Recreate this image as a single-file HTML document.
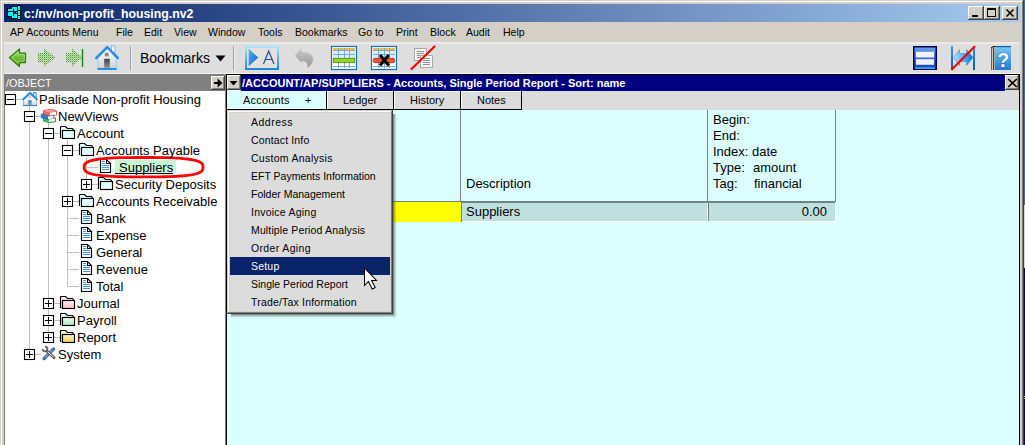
<!DOCTYPE html>
<html><head><meta charset="utf-8">
<style>
*{margin:0;padding:0;box-sizing:border-box}
html,body{width:1025px;height:445px;overflow:hidden;background:#d4d0c8;font-family:"Liberation Sans",sans-serif;position:relative}
.a{position:absolute}
.t{position:absolute;white-space:nowrap;line-height:1}
svg{position:absolute;overflow:visible}
</style></head><body>
<div class="a" style="left:1px;top:1px;width:1px;height:444px;background:#fff;"></div>
<div class="a" style="left:1px;top:1px;width:1021px;height:1px;background:#fff;"></div>
<div class="a" style="left:1022px;top:1px;width:1px;height:444px;background:#808080;"></div>
<div class="a" style="left:1023px;top:0px;width:1px;height:445px;background:#404040;"></div>
<div class="a" style="left:1024px;top:0px;width:1px;height:205px;background:#3a6ea5;"></div>
<div class="a" style="left:1024px;top:205px;width:1px;height:63px;background:#d8d8d8;"></div>
<div class="a" style="left:1024px;top:268px;width:1px;height:177px;background:#000080;"></div>
<div class="a" style="left:1024px;top:396px;width:1px;height:1px;background:#ffd000;"></div>
<div class="a" style="left:1024px;top:398px;width:1px;height:1px;background:#e0a040;"></div>
<div class="a" style="left:4px;top:4px;width:1016px;height:18px;background:linear-gradient(to right,#0a246a,#a6caf0);"></div>
<svg style="left:0;top:0" width="30" height="24" viewBox="0 0 30 24"><g fill="#000"><rect x="7" y="8" width="7" height="4"/><rect x="7" y="11" width="7" height="6"/><rect x="11" y="6" width="7" height="4"/><rect x="13" y="8" width="5" height="4"/><rect x="13" y="13" width="5" height="4"/><rect x="11" y="15" width="7" height="4"/><rect x="15" y="11" width="3" height="3"/><rect x="17" y="5" width="4" height="6"/><rect x="17" y="10" width="4" height="6"/><rect x="17" y="15" width="4" height="5"/></g><g fill="#00ffff"><rect x="8" y="9" width="5" height="2"/><rect x="8" y="12" width="5" height="4"/><rect x="12" y="7" width="5" height="2"/><rect x="14" y="9" width="3" height="2"/><rect x="14" y="14" width="3" height="2"/><rect x="12" y="16" width="5" height="2"/><rect x="16" y="12" width="1" height="1"/><rect x="18" y="6" width="2" height="4"/><rect x="18" y="11" width="2" height="4"/><rect x="18" y="16" width="2" height="3"/></g></svg>
<div class="t" style="left:24px;top:8px;font-size:12.3px;color:#fff;font-weight:bold">c:/nv/non-profit_housing.nv2</div>
<div class="a" style="left:968px;top:6px;width:16px;height:14px;background:#404040;"></div>
<div class="a" style="left:968px;top:6px;width:15px;height:13px;background:#fff;"></div>
<div class="a" style="left:969px;top:7px;width:14px;height:12px;background:#808080;"></div>
<div class="a" style="left:969px;top:7px;width:13px;height:11px;background:#d4d0c8;"></div>
<div class="a" style="left:984px;top:6px;width:16px;height:14px;background:#404040;"></div>
<div class="a" style="left:984px;top:6px;width:15px;height:13px;background:#fff;"></div>
<div class="a" style="left:985px;top:7px;width:14px;height:12px;background:#808080;"></div>
<div class="a" style="left:985px;top:7px;width:13px;height:11px;background:#d4d0c8;"></div>
<div class="a" style="left:1002px;top:6px;width:16px;height:14px;background:#404040;"></div>
<div class="a" style="left:1002px;top:6px;width:15px;height:13px;background:#fff;"></div>
<div class="a" style="left:1003px;top:7px;width:14px;height:12px;background:#808080;"></div>
<div class="a" style="left:1003px;top:7px;width:13px;height:11px;background:#d4d0c8;"></div>
<div class="a" style="left:972px;top:15px;width:6px;height:2px;background:#000;"></div>
<div class="a" style="left:987px;top:8px;width:9px;height:9px;background:#000;"></div>
<div class="a" style="left:988px;top:10px;width:7px;height:6px;background:#d4d0c8;"></div>
<svg style="left:1000px;top:0" width="20" height="22" viewBox="1000 0 20 22"><path d="M1006.5 9.5 L1013.5 16.5 M1013.5 9.5 L1006.5 16.5" stroke="#000" stroke-width="1.5"/></svg>
<div class="t" style="left:10px;top:27px;font-size:10.5px;color:#000;">AP Accounts Menu</div>
<div class="t" style="left:116px;top:27px;font-size:10.5px;color:#000;">File</div>
<div class="t" style="left:144px;top:27px;font-size:10.5px;color:#000;">Edit</div>
<div class="t" style="left:174px;top:27px;font-size:10.5px;color:#000;">View</div>
<div class="t" style="left:208px;top:27px;font-size:10.5px;color:#000;">Window</div>
<div class="t" style="left:258px;top:27px;font-size:10.5px;color:#000;">Tools</div>
<div class="t" style="left:295px;top:27px;font-size:10.5px;color:#000;">Bookmarks</div>
<div class="t" style="left:358px;top:27px;font-size:10.5px;color:#000;">Go to</div>
<div class="t" style="left:396px;top:27px;font-size:10.5px;color:#000;">Print</div>
<div class="t" style="left:430px;top:27px;font-size:10.5px;color:#000;">Block</div>
<div class="t" style="left:466px;top:27px;font-size:10.5px;color:#000;">Audit</div>
<div class="t" style="left:503px;top:27px;font-size:10.5px;color:#000;">Help</div>
<div class="a" style="left:4px;top:42px;width:1016px;height:2px;background:#eaeaea;"></div>
<div class="a" style="left:4px;top:44px;width:1016px;height:29px;background:#dedede;"></div>
<div class="a" style="left:4px;top:73px;width:1016px;height:1px;background:#f4f4f4;"></div>
<svg style="left:0;top:40px" width="1025" height="36" viewBox="0 40 1025 36">
<defs>
<linearGradient id="gA" x1="0" y1="0" x2="0" y2="1"><stop offset="0" stop-color="#9ee06a"/><stop offset="1" stop-color="#3f9a12"/></linearGradient>
<pattern id="dots" width="2" height="2" patternUnits="userSpaceOnUse"><rect x="0" y="1" width="1" height="1" fill="#2a8a10"/><rect x="1" y="0" width="1" height="1" fill="#78cc48"/></pattern>
<linearGradient id="gBlue" x1="0" y1="0" x2="0" y2="1"><stop offset="0" stop-color="#a8e4ff"/><stop offset="1" stop-color="#1a88e0"/></linearGradient>
<linearGradient id="gTri" x1="0" y1="0" x2="1" y2="1"><stop offset="0" stop-color="#5ab0f0"/><stop offset="1" stop-color="#0a60c0"/></linearGradient>
<linearGradient id="gGray" x1="0" y1="0" x2="0" y2="1"><stop offset="0" stop-color="#c8c8c8"/><stop offset="1" stop-color="#909090"/></linearGradient>
<linearGradient id="gWin" x1="0" y1="0" x2="0" y2="1"><stop offset="0" stop-color="#6aa0f0"/><stop offset="1" stop-color="#1040c0"/></linearGradient>
<linearGradient id="gBook" x1="0" y1="0" x2="0" y2="1"><stop offset="0" stop-color="#7cc8f4"/><stop offset="1" stop-color="#1e7ed0"/></linearGradient>
<linearGradient id="gHouse" x1="0" y1="0" x2="0" y2="1"><stop offset="0" stop-color="#ffffff"/><stop offset="1" stop-color="#d0d0d0"/></linearGradient>
<linearGradient id="gDoor" x1="0" y1="0" x2="0" y2="1"><stop offset="0" stop-color="#404040"/><stop offset="1" stop-color="#909090"/></linearGradient>
</defs>
<!-- back arrow -->
<path d="M9.3 57.6 L19.5 48.9 V53.2 H25.5 V62.6 H19.5 V66.6 Z" fill="url(#gA)" stroke="#2e7c0a" stroke-width="1.2" stroke-linejoin="round"/>
<path d="M12 57.6 L18.2 52.2 V54.6 H24.2 V61.2 H18.2 V63.2 Z" fill="none" stroke="#b8f090" stroke-width="0.8" opacity="0.8"/>
<!-- forward dotted -->
<path d="M38 53 H44 V48.5 L55.5 57.5 L44 66.5 V62.5 H38 Z" fill="url(#dots)"/>
<path d="M38 53 H44 V48.5 L55.5 57.5 L44 66.5 V62.5 H38 Z" fill="#b0e090" opacity="0.18"/>
<!-- forward to end dotted -->
<path d="M66 53 H72 V48.5 L82.5 57.5 L72 66.5 V62.5 H66 Z" fill="url(#dots)"/>
<path d="M66 53 H72 V48.5 L82.5 57.5 L72 66.5 V62.5 H66 Z" fill="#b0e090" opacity="0.18"/>
<rect x="81.8" y="49" width="1.4" height="18" fill="#108a10"/>
<!-- home -->
<rect x="111.5" y="46" width="3.5" height="7" fill="#f4f4f4" stroke="#70b0f0" stroke-width="0.8"/>
<path d="M98 57.5 L107.2 48.5 L116.5 57.5 V69.5 H98 Z" fill="url(#gHouse)" stroke="#90c4f4" stroke-width="0.8"/>
<path d="M96.3 58 L107.2 47.2 L117.8 58" fill="none" stroke="#2a90e8" stroke-width="2.6" stroke-linecap="round" stroke-linejoin="round"/>
<rect x="104.8" y="52.8" width="4" height="3.6" fill="#8a8a8a"/>
<rect x="104.2" y="58.8" width="5.6" height="9" fill="url(#gDoor)"/>
<rect x="97.5" y="68" width="19" height="1.8" fill="#1a88e8"/>
<!-- separator -->
<rect x="130" y="46" width="1" height="24" fill="#a0a0a0"/><rect x="131" y="46" width="1" height="24" fill="#fff" opacity="0.5"/>
<!-- bookmarks -->
<text x="140" y="62.8" font-family="Liberation Sans" font-size="14" fill="#000">Bookmarks</text>
<path d="M215.5 55.5 H225.5 L220.5 61.5 Z" fill="#000"/>
<rect x="233" y="46" width="1" height="24" fill="#a0a0a0"/><rect x="234" y="46" width="1" height="24" fill="#fff" opacity="0.5"/>
<!-- play A -->
<rect x="246" y="47" width="32" height="22" fill="#e4e0dc" stroke="url(#gBlue)" stroke-width="2"/>
<path d="M248.7 48.7 L258.2 57.5 L248.7 66.3 Z" fill="url(#gTri)"/>
<path d="M263.5 64 L268.7 51 L274 64 M265.3 59.5 H272.2" fill="none" stroke="#1848a8" stroke-width="1.2"/>
<!-- undo gray -->
<path d="M295 55.6 L301.6 48.1 V52 C308 52 313 54 313 59 C313 63 310.5 66 307 68 C308.5 64.5 307 61 301.6 61 V63 Z" fill="url(#gGray)" opacity="0.9"/>
<!-- table insert -->
<g>
<rect x="331.5" y="46.5" width="25" height="23" fill="#fff" stroke="#1a70b8" stroke-width="1.2"/>
<rect x="333" y="48" width="22" height="2" fill="#f8b840"/>
<rect x="333" y="50.5" width="22" height="8" fill="#d8f0ff"/>
<path d="M333 50.5 H355 M333 54.5 H355 M333 66.5 H355 M338.5 48 V68 M344.5 48 V68 M349.5 48 V68" stroke="#7aa8d8" stroke-width="1"/>
<rect x="333.3" y="58.3" width="21.4" height="4.4" fill="#96d81e" stroke="#3a8a08" stroke-width="0.8"/>
</g>
<!-- table delete -->
<g>
<rect x="371.5" y="46.5" width="25" height="23" fill="#fff" stroke="#1a70b8" stroke-width="1.2"/>
<rect x="373" y="48" width="22" height="2" fill="#f8b840"/>
<rect x="373" y="50.5" width="22" height="8" fill="#d8f0ff"/>
<path d="M373 50.5 H395 M373 54.5 H395 M373 66.5 H395 M378.5 48 V68 M384.5 48 V68 M389.5 48 V68" stroke="#7aa8d8" stroke-width="1"/>
<rect x="373.3" y="58.3" width="21.4" height="4.4" rx="1.5" fill="#f05838" stroke="#b02010" stroke-width="0.8"/>
<path d="M380 55 L388.8 65.5 M388.8 55 L380 65.5" stroke="#000" stroke-width="3"/>
</g>
<!-- copy disabled -->
<rect x="414.5" y="48.5" width="12" height="12" fill="#fafafa" stroke="#a8a8a8" stroke-width="1"/>
<path d="M417 51.5 H424 M417 53.5 H424 M417 55.5 H424 M417 57.5 H424" stroke="#909090" stroke-width="1"/>
<rect x="420.5" y="55.5" width="12" height="12" fill="#fafafa" stroke="#a8a8a8" stroke-width="1"/>
<path d="M423 58.5 H430 M423 60.5 H430 M423 62.5 H430 M423 64.5 H430" stroke="#909090" stroke-width="1"/>
<path d="M411.5 69 L434.5 46.5" stroke="#ff0000" stroke-width="2.2" stroke-linecap="round"/>
<!-- window icon -->
<rect x="913" y="46" width="24" height="24" fill="#00004a"/>
<rect x="914.5" y="47.5" width="21" height="21" fill="url(#gWin)"/>
<rect x="916" y="51.8" width="18" height="5.6" fill="#f4f4fa"/>
<rect x="916" y="59.2" width="18" height="5.6" fill="#f0f0f8"/>
<rect x="915" y="67.5" width="20" height="1.2" fill="#40e0ff"/>
<!-- arrows disabled -->
<linearGradient id="gBar" x1="0" y1="0" x2="0" y2="1"><stop offset="0" stop-color="#3a98f0"/><stop offset="1" stop-color="#0a58c0"/></linearGradient><rect x="951" y="46" width="2" height="24" fill="url(#gBar)"/>
<rect x="973" y="46" width="2" height="24" fill="url(#gBar)"/>
<linearGradient id="gArr" x1="0" y1="0" x2="1" y2="0"><stop offset="0" stop-color="#a8e4ff"/><stop offset="0.5" stop-color="#50b0f0"/><stop offset="1" stop-color="#1070d0"/></linearGradient><path d="M953.5 57.5 L959.5 49.5 V53.5 H966.5 V49.5 L973 57.5 L966.5 65.5 V61.5 H959.5 V65.5 Z" fill="url(#gArr)" stroke="#3090e0" stroke-width="0.6"/>
<path d="M952 69.2 L974.5 46.8" stroke="#ff0000" stroke-width="2.2" stroke-linecap="round"/>
<!-- help book -->
<rect x="991" y="47" width="4" height="23" fill="#c8c8c8"/>
<rect x="991" y="47" width="1" height="23" fill="#606060"/>
<rect x="993" y="47.5" width="1.2" height="22.5" fill="#404040"/>
<path d="M991.5 48 Q992 46.5 994 46.5 H995.5" fill="none" stroke="#000" stroke-width="1"/>
<rect x="995" y="46" width="16" height="24" fill="url(#gBook)"/>
<rect x="995" y="46" width="16" height="1.2" fill="#1a5aa0"/>
<text x="1003.2" y="66.5" text-anchor="middle" font-family="Liberation Sans" font-weight="bold" font-size="19.5" fill="#fff" stroke="#2a70c0" stroke-width="1.2" paint-order="stroke">?</text>
</svg>

<div class="a" style="left:4px;top:74px;width:222px;height:371px;background:#fff;"></div>
<div class="a" style="left:4px;top:74px;width:1px;height:371px;background:#808080;"></div>
<div class="a" style="left:225px;top:74px;width:1px;height:371px;background:#808080;"></div>
<div class="a" style="left:4px;top:74px;width:221px;height:17px;background:#808080;"></div>
<div class="t" style="left:6px;top:77.5px;font-size:10.8px;color:#fff;">/OBJECT</div>
<div class="a" style="left:211px;top:76px;width:14px;height:14px;background:#404040;"></div>
<div class="a" style="left:211px;top:76px;width:13px;height:13px;background:#fff;"></div>
<div class="a" style="left:212px;top:77px;width:12px;height:12px;background:#808080;"></div>
<div class="a" style="left:212px;top:77px;width:11px;height:11px;background:#d4d0c8;"></div>
<svg style="left:211px;top:76px" width="14" height="14" viewBox="211 76 14 14"><path d="M214 83 H219" stroke="#000" stroke-width="2"/><path d="M217.6 78.6 L222.5 83 L217.6 87.4 Z" fill="#000"/></svg>
<svg style="left:0;top:0" width="226" height="445" viewBox="0 0 226 445"><defs><linearGradient id="fpk" x1="0" y1="0" x2="0" y2="1"><stop offset="0" stop-color="#fff4f6"/><stop offset="1" stop-color="#ffb8c4"/></linearGradient><linearGradient id="fgr" x1="0" y1="0" x2="0" y2="1"><stop offset="0" stop-color="#f0fff4"/><stop offset="1" stop-color="#a8e4bc"/></linearGradient><linearGradient id="fyl" x1="0" y1="0" x2="0" y2="1"><stop offset="0" stop-color="#fff8d0"/><stop offset="1" stop-color="#f0cc50"/></linearGradient><linearGradient id="hb" x1="0" y1="0" x2="0" y2="1"><stop offset="0" stop-color="#d8d8d8"/><stop offset="0.5" stop-color="#ffffff"/><stop offset="1" stop-color="#d0d0d0"/></linearGradient><linearGradient id="door2" x1="0" y1="0" x2="0" y2="1"><stop offset="0" stop-color="#2a88c8"/><stop offset="1" stop-color="#80a8b8"/></linearGradient></defs>
<rect x="29" y="106" width="1" height="249" fill="#c0c0c0"/>
<rect x="48" y="123" width="1" height="215" fill="#c0c0c0"/>
<rect x="67" y="140" width="1" height="147" fill="#c0c0c0"/>
<rect x="86" y="157" width="1" height="28" fill="#c0c0c0"/>
<rect x="16" y="99" width="6" height="1" fill="#c0c0c0"/>
<rect x="5.5" y="94.5" width="10" height="10" fill="#fff" stroke="#000" stroke-width="1.1"/>
<rect x="7" y="99" width="7" height="1" fill="#000"/>
<g><rect x="33.6" y="92.6" width="2.4" height="4.5" fill="#fff" stroke="#1e88e5" stroke-width="1"/><path d="M23.5 99.5 L30 93.5 L36.5 99.5 V105.5 H23.5 Z" fill="url(#hb)" stroke="#a8a8a8" stroke-width="0.8"/><path d="M22.5 100 L30 92.8 L37.5 100" fill="none" stroke="#1e88e5" stroke-width="1.8"/><circle cx="30" cy="97.3" r="1.3" fill="#c8c8c8"/><rect x="28.2" y="100.2" width="3.5" height="5" fill="url(#door2)"/><rect x="23" y="105" width="14" height="1.1" fill="#1e88e5"/></g>
<rect x="35" y="116" width="6" height="1" fill="#c0c0c0"/>
<rect x="24.5" y="111.5" width="10" height="10" fill="#fff" stroke="#000" stroke-width="1.1"/>
<rect x="26" y="116" width="7" height="1" fill="#000"/>
<g><path d="M43.5 117.5 L51 116.8 L55.5 118 V121.8 L48.5 122.5 L43.5 121 Z" fill="#48c848" stroke="#2a7a2a" stroke-width="0.8"/><path d="M49 119 L55 118.5 V121.3 L49 121.8 Z" fill="#fff"/><path d="M41.2 114 L48.5 113.2 L53.8 114.5 V118.5 L47.5 119.2 L41.2 117.8 Z" fill="#1e7ee0" stroke="#1858a8" stroke-width="0.6"/><path d="M48 116.3 L53.5 115.8 V118.4 L48 118.9 Z" fill="#fff"/><path d="M43.5 110.5 L51.5 109.2 L56.5 111 V115 L49.5 116 L43.5 114.2 Z" fill="#f06a6a" stroke="#c03030" stroke-width="0.7"/><path d="M43.8 110.8 L51.5 109.5 L56 111.2 L49.2 112.5 Z" fill="#ff9a9a"/><path d="M50 112.8 L56 111.8 V114.8 L50 115.6 Z" fill="#fff"/></g>
<rect x="54" y="133" width="6" height="1" fill="#c0c0c0"/>
<rect x="43.5" y="128.5" width="10" height="10" fill="#fff" stroke="#000" stroke-width="1.1"/>
<rect x="45" y="133" width="7" height="1" fill="#000"/>
<g transform="translate(60,126)"><path d="M0.5 12.5 V0.5 H5.5 L7.5 2.5 H12.5 V4.5 H2.5 V12.5 Z" fill="#e0ffff"/><path d="M0.5 12 V1.2 Q0.5 0.5 1.2 0.5 H5.5 L7.5 2.5 H12.5 L13.8 3.8" fill="none" stroke="#000" stroke-width="1.15"/><rect x="2.5" y="4.5" width="12" height="8" fill="#e0ffff" stroke="#000" stroke-width="1.15"/></g>
<rect x="73" y="150" width="6" height="1" fill="#c0c0c0"/>
<rect x="62.5" y="145.5" width="10" height="10" fill="#fff" stroke="#000" stroke-width="1.1"/>
<rect x="64" y="150" width="7" height="1" fill="#000"/>
<g transform="translate(79,143)"><path d="M0.5 12.5 V0.5 H5.5 L7.5 2.5 H12.5 V4.5 H2.5 V12.5 Z" fill="#e0ffff"/><path d="M0.5 12 V1.2 Q0.5 0.5 1.2 0.5 H5.5 L7.5 2.5 H12.5 L13.8 3.8" fill="none" stroke="#000" stroke-width="1.15"/><rect x="2.5" y="4.5" width="12" height="8" fill="#e0ffff" stroke="#000" stroke-width="1.15"/></g>
<rect x="87" y="167" width="11" height="1" fill="#c0c0c0"/>
<g transform="translate(100,159)"><path d="M0.5 0.5 H6.5 L10.5 4.5 V13.5 H0.5 Z" fill="#fff" stroke="#000" stroke-width="1.15"/><path d="M6.5 0.5 V4.5 H10.5" fill="none" stroke="#000" stroke-width="1.1"/><path d="M2 2.5 H5 M2 4.5 H5 M2 6.5 H9 M2 8.5 H9 M2 10.5 H9" stroke="#3898e0" stroke-width="1"/></g>
<rect x="92" y="184" width="6" height="1" fill="#c0c0c0"/>
<rect x="81.5" y="179.5" width="10" height="10" fill="#fff" stroke="#000" stroke-width="1.1"/>
<rect x="83" y="184" width="7" height="1" fill="#000"/>
<rect x="86" y="181" width="1" height="7" fill="#000"/>
<g transform="translate(98,177)"><path d="M0.5 12.5 V0.5 H5.5 L7.5 2.5 H12.5 V4.5 H2.5 V12.5 Z" fill="#e0ffff"/><path d="M0.5 12 V1.2 Q0.5 0.5 1.2 0.5 H5.5 L7.5 2.5 H12.5 L13.8 3.8" fill="none" stroke="#000" stroke-width="1.15"/><rect x="2.5" y="4.5" width="12" height="8" fill="#e0ffff" stroke="#000" stroke-width="1.15"/></g>
<rect x="73" y="201" width="6" height="1" fill="#c0c0c0"/>
<rect x="62.5" y="196.5" width="10" height="10" fill="#fff" stroke="#000" stroke-width="1.1"/>
<rect x="64" y="201" width="7" height="1" fill="#000"/>
<rect x="67" y="198" width="1" height="7" fill="#000"/>
<g transform="translate(79,194)"><path d="M0.5 12.5 V0.5 H5.5 L7.5 2.5 H12.5 V4.5 H2.5 V12.5 Z" fill="#e0ffff"/><path d="M0.5 12 V1.2 Q0.5 0.5 1.2 0.5 H5.5 L7.5 2.5 H12.5 L13.8 3.8" fill="none" stroke="#000" stroke-width="1.15"/><rect x="2.5" y="4.5" width="12" height="8" fill="#e0ffff" stroke="#000" stroke-width="1.15"/></g>
<rect x="68" y="218" width="11" height="1" fill="#c0c0c0"/>
<g transform="translate(81,210)"><path d="M0.5 0.5 H6.5 L10.5 4.5 V13.5 H0.5 Z" fill="#fff" stroke="#000" stroke-width="1.15"/><path d="M6.5 0.5 V4.5 H10.5" fill="none" stroke="#000" stroke-width="1.1"/><path d="M2 2.5 H5 M2 4.5 H5 M2 6.5 H9 M2 8.5 H9 M2 10.5 H9" stroke="#3898e0" stroke-width="1"/></g>
<rect x="68" y="235" width="11" height="1" fill="#c0c0c0"/>
<g transform="translate(81,227)"><path d="M0.5 0.5 H6.5 L10.5 4.5 V13.5 H0.5 Z" fill="#fff" stroke="#000" stroke-width="1.15"/><path d="M6.5 0.5 V4.5 H10.5" fill="none" stroke="#000" stroke-width="1.1"/><path d="M2 2.5 H5 M2 4.5 H5 M2 6.5 H9 M2 8.5 H9 M2 10.5 H9" stroke="#3898e0" stroke-width="1"/></g>
<rect x="68" y="252" width="11" height="1" fill="#c0c0c0"/>
<g transform="translate(81,244)"><path d="M0.5 0.5 H6.5 L10.5 4.5 V13.5 H0.5 Z" fill="#fff" stroke="#000" stroke-width="1.15"/><path d="M6.5 0.5 V4.5 H10.5" fill="none" stroke="#000" stroke-width="1.1"/><path d="M2 2.5 H5 M2 4.5 H5 M2 6.5 H9 M2 8.5 H9 M2 10.5 H9" stroke="#3898e0" stroke-width="1"/></g>
<rect x="68" y="269" width="11" height="1" fill="#c0c0c0"/>
<g transform="translate(81,261)"><path d="M0.5 0.5 H6.5 L10.5 4.5 V13.5 H0.5 Z" fill="#fff" stroke="#000" stroke-width="1.15"/><path d="M6.5 0.5 V4.5 H10.5" fill="none" stroke="#000" stroke-width="1.1"/><path d="M2 2.5 H5 M2 4.5 H5 M2 6.5 H9 M2 8.5 H9 M2 10.5 H9" stroke="#3898e0" stroke-width="1"/></g>
<rect x="68" y="286" width="11" height="1" fill="#c0c0c0"/>
<g transform="translate(81,278)"><path d="M0.5 0.5 H6.5 L10.5 4.5 V13.5 H0.5 Z" fill="#fff" stroke="#000" stroke-width="1.15"/><path d="M6.5 0.5 V4.5 H10.5" fill="none" stroke="#000" stroke-width="1.1"/><path d="M2 2.5 H5 M2 4.5 H5 M2 6.5 H9 M2 8.5 H9 M2 10.5 H9" stroke="#3898e0" stroke-width="1"/></g>
<rect x="54" y="303" width="6" height="1" fill="#c0c0c0"/>
<rect x="43.5" y="298.5" width="10" height="10" fill="#fff" stroke="#000" stroke-width="1.1"/>
<rect x="45" y="303" width="7" height="1" fill="#000"/>
<rect x="48" y="300" width="1" height="7" fill="#000"/>
<g transform="translate(60,296)"><path d="M0.5 12.5 V0.5 H5.5 L7.5 2.5 H12.5 V4.5 H2.5 V12.5 Z" fill="url(#fpk)"/><path d="M0.5 12 V1.2 Q0.5 0.5 1.2 0.5 H5.5 L7.5 2.5 H12.5 L13.8 3.8" fill="none" stroke="#000" stroke-width="1.15"/><rect x="2.5" y="4.5" width="12" height="8" fill="url(#fpk)" stroke="#000" stroke-width="1.15"/></g>
<rect x="54" y="320" width="6" height="1" fill="#c0c0c0"/>
<rect x="43.5" y="315.5" width="10" height="10" fill="#fff" stroke="#000" stroke-width="1.1"/>
<rect x="45" y="320" width="7" height="1" fill="#000"/>
<rect x="48" y="317" width="1" height="7" fill="#000"/>
<g transform="translate(60,313)"><path d="M0.5 12.5 V0.5 H5.5 L7.5 2.5 H12.5 V4.5 H2.5 V12.5 Z" fill="url(#fgr)"/><path d="M0.5 12 V1.2 Q0.5 0.5 1.2 0.5 H5.5 L7.5 2.5 H12.5 L13.8 3.8" fill="none" stroke="#000" stroke-width="1.15"/><rect x="2.5" y="4.5" width="12" height="8" fill="url(#fgr)" stroke="#000" stroke-width="1.15"/></g>
<rect x="54" y="337" width="6" height="1" fill="#c0c0c0"/>
<rect x="43.5" y="332.5" width="10" height="10" fill="#fff" stroke="#000" stroke-width="1.1"/>
<rect x="45" y="337" width="7" height="1" fill="#000"/>
<rect x="48" y="334" width="1" height="7" fill="#000"/>
<g transform="translate(60,330)"><path d="M0.5 12.5 V0.5 H5.5 L7.5 2.5 H12.5 V4.5 H2.5 V12.5 Z" fill="url(#fyl)"/><path d="M0.5 12 V1.2 Q0.5 0.5 1.2 0.5 H5.5 L7.5 2.5 H12.5 L13.8 3.8" fill="none" stroke="#000" stroke-width="1.15"/><rect x="2.5" y="4.5" width="12" height="8" fill="url(#fyl)" stroke="#000" stroke-width="1.15"/></g>
<rect x="35" y="354" width="6" height="1" fill="#c0c0c0"/>
<rect x="24.5" y="349.5" width="10" height="10" fill="#fff" stroke="#000" stroke-width="1.1"/>
<rect x="26" y="354" width="7" height="1" fill="#000"/>
<rect x="29" y="351" width="1" height="7" fill="#000"/>
<g><path d="M44 358.6 L53.6 349" stroke="#3a6ab0" stroke-width="3.2" stroke-linecap="round"/><path d="M44.6 358 L53 349.6" stroke="#9cc0ec" stroke-width="1"/><path d="M47.5 351.5 L54 357.6" stroke="#626262" stroke-width="3" stroke-linecap="round"/><path d="M47.8 351.8 L53.7 357.3" stroke="#ececec" stroke-width="1"/><path d="M44.9 346.6 A2.4 2.4 0 1 1 42.6 348.8" fill="none" stroke="#626262" stroke-width="1.9"/></g>
<rect x="115" y="160" width="61" height="14" fill="#c8f4d8"/><rect x="115" y="173" width="58" height="1" fill="#000"/><path d="M203.00 167.20 L202.95 168.56 L202.78 169.35 L202.51 170.02 L202.13 170.60 L201.64 171.14 L201.05 171.63 L200.34 172.09 L199.53 172.52 L198.60 172.93 L197.57 173.31 L196.43 173.67 L195.17 174.01 L193.81 174.32 L192.33 174.62 L190.75 174.90 L189.04 175.16 L187.22 175.40 L185.28 175.62 L183.21 175.83 L181.02 176.01 L178.69 176.18 L176.21 176.33 L173.57 176.47 L170.75 176.58 L167.72 176.68 L164.45 176.76 L160.85 176.82 L156.78 176.86 L151.91 176.89 L143.60 176.90 L135.29 176.89 L130.42 176.86 L126.35 176.82 L122.75 176.76 L119.48 176.68 L116.45 176.58 L113.63 176.47 L110.99 176.33 L108.51 176.18 L106.18 176.01 L103.99 175.83 L101.92 175.62 L99.98 175.40 L98.16 175.16 L96.45 174.90 L94.87 174.62 L93.39 174.32 L92.03 174.01 L90.77 173.67 L89.63 173.31 L88.60 172.93 L87.67 172.52 L86.86 172.09 L86.15 171.63 L85.56 171.14 L85.07 170.60 L84.69 170.02 L84.42 169.35 L84.25 168.56 L84.20 167.20 L84.25 165.84 L84.42 165.05 L84.69 164.38 L85.07 163.80 L85.56 163.26 L86.15 162.77 L86.86 162.31 L87.67 161.88 L88.60 161.47 L89.63 161.09 L90.77 160.73 L92.03 160.39 L93.39 160.08 L94.87 159.78 L96.45 159.50 L98.16 159.24 L99.98 159.00 L101.92 158.78 L103.99 158.57 L106.18 158.39 L108.51 158.22 L110.99 158.07 L113.63 157.93 L116.45 157.82 L119.48 157.72 L122.75 157.64 L126.35 157.58 L130.42 157.54 L135.29 157.51 L143.60 157.50 L151.91 157.51 L156.78 157.54 L160.85 157.58 L164.45 157.64 L167.72 157.72 L170.75 157.82 L173.57 157.93 L176.21 158.07 L178.69 158.22 L181.02 158.39 L183.21 158.57 L185.28 158.78 L187.22 159.00 L189.04 159.24 L190.75 159.50 L192.33 159.78 L193.81 160.08 L195.17 160.39 L196.43 160.73 L197.57 161.09 L198.60 161.47 L199.53 161.88 L200.34 162.31 L201.05 162.77 L201.64 163.26 L202.13 163.80 L202.51 164.38 L202.78 165.05 L202.95 165.84 Z" fill="none" stroke="#ff0000" stroke-width="2.8" stroke-linejoin="round"/></svg>
<div class="t" style="left:39px;top:93px;font-size:13px;color:#000">Palisade Non-profit Housing</div>
<div class="t" style="left:58px;top:110px;font-size:13px;color:#000">NewViews</div>
<div class="t" style="left:77px;top:127px;font-size:13px;color:#000">Account</div>
<div class="t" style="left:96px;top:144px;font-size:13px;color:#000">Accounts Payable</div>
<div class="t" style="left:119px;top:161px;font-size:13px;color:#000">Suppliers</div>
<div class="t" style="left:115px;top:178px;font-size:13px;color:#000">Security Deposits</div>
<div class="t" style="left:96px;top:195px;font-size:13px;color:#000">Accounts Receivable</div>
<div class="t" style="left:96px;top:212px;font-size:13px;color:#000">Bank</div>
<div class="t" style="left:96px;top:229px;font-size:13px;color:#000">Expense</div>
<div class="t" style="left:96px;top:246px;font-size:13px;color:#000">General</div>
<div class="t" style="left:96px;top:263px;font-size:13px;color:#000">Revenue</div>
<div class="t" style="left:96px;top:280px;font-size:13px;color:#000">Total</div>
<div class="t" style="left:77px;top:297px;font-size:13px;color:#000">Journal</div>
<div class="t" style="left:77px;top:314px;font-size:13px;color:#000">Payroll</div>
<div class="t" style="left:77px;top:331px;font-size:13px;color:#000">Report</div>
<div class="t" style="left:58px;top:348px;font-size:13px;color:#000">System</div>
<div class="a" style="left:226px;top:74px;width:794px;height:371px;background:#000;"></div>
<div class="a" style="left:227px;top:75px;width:792px;height:370px;background:#dcffff;"></div>
<div class="a" style="left:227px;top:75px;width:14px;height:15px;background:#404040;"></div>
<div class="a" style="left:227px;top:75px;width:13px;height:14px;background:#fff;"></div>
<div class="a" style="left:228px;top:76px;width:12px;height:13px;background:#808080;"></div>
<div class="a" style="left:228px;top:76px;width:11px;height:12px;background:#d4d0c8;"></div>
<svg style="left:227px;top:75px" width="14" height="15" viewBox="227 75 14 15"><path d="M229.5 81 H237.5 L233.5 85.5 Z" fill="#000"/></svg>
<div class="a" style="left:241px;top:75px;width:764px;height:16px;background:#000080;"></div>
<div class="t" style="left:242px;top:78px;font-size:11px;color:#fff;font-weight:bold">/ACCOUNT/AP/SUPPLIERS - Accounts, Single Period Report - Sort: name</div>
<div class="a" style="left:1005px;top:90px;width:14px;height:1px;background:#dcdcdc;"></div>
<div class="a" style="left:1005px;top:75px;width:14px;height:15px;background:#404040;"></div>
<div class="a" style="left:1005px;top:75px;width:13px;height:14px;background:#fff;"></div>
<div class="a" style="left:1006px;top:76px;width:12px;height:13px;background:#808080;"></div>
<div class="a" style="left:1006px;top:76px;width:11px;height:12px;background:#d4d0c8;"></div>
<svg style="left:1005px;top:75px" width="14" height="15" viewBox="1005 75 14 15"><path d="M1008.2 79 L1016.8 87 M1016.8 79 L1008.2 87" stroke="#000" stroke-width="1.7"/></svg>
<div class="a" style="left:241px;top:91px;width:778px;height:19px;background:#dcdcdc;"></div>
<div class="a" style="left:227px;top:91px;width:99px;height:18px;background:#dcffff;"></div>
<div class="a" style="left:227px;top:109px;width:295px;height:1px;background:#000;"></div>
<div class="a" style="left:326px;top:91px;width:1px;height:18px;background:#000;"></div>
<div class="a" style="left:327px;top:91px;width:66px;height:1px;background:#fff;"></div>
<div class="a" style="left:327px;top:91px;width:1px;height:18px;background:#fff;"></div>
<div class="a" style="left:393px;top:91px;width:1px;height:18px;background:#000;"></div>
<div class="a" style="left:394px;top:91px;width:66px;height:1px;background:#fff;"></div>
<div class="a" style="left:394px;top:91px;width:1px;height:18px;background:#fff;"></div>
<div class="a" style="left:460px;top:91px;width:1px;height:18px;background:#000;"></div>
<div class="a" style="left:461px;top:91px;width:60px;height:1px;background:#fff;"></div>
<div class="a" style="left:461px;top:91px;width:1px;height:18px;background:#fff;"></div>
<div class="a" style="left:521px;top:91px;width:1px;height:19px;background:#000;"></div>
<div class="t" style="left:243px;top:95px;font-size:11px;color:#000;letter-spacing:0.18px">Accounts</div>
<div class="t" style="left:305px;top:95px;font-size:11px;color:#000;">+</div>
<div class="t" style="left:343px;top:95px;font-size:11px;color:#000;">Ledger</div>
<div class="t" style="left:410px;top:95px;font-size:11px;color:#000;">History</div>
<div class="t" style="left:477px;top:95px;font-size:11px;color:#000;">Notes</div>
<div class="a" style="left:460px;top:110px;width:1px;height:91px;background:#808080;"></div>
<div class="a" style="left:707px;top:110px;width:1px;height:91px;background:#808080;"></div>
<div class="a" style="left:835px;top:110px;width:1px;height:91px;background:#808080;"></div>
<div class="a" style="left:393px;top:201px;width:443px;height:1px;background:#6e8484;"></div>
<div class="a" style="left:461px;top:202px;width:375px;height:1px;background:#6e8484;"></div>
<div class="a" style="left:393px;top:202px;width:68px;height:20px;background:#ffff00;"></div>
<div class="a" style="left:461px;top:202px;width:1px;height:20px;background:#6e8484;"></div>
<div class="a" style="left:462px;top:203px;width:245px;height:18px;background:#c0e0e0;"></div>
<div class="a" style="left:707px;top:203px;width:1px;height:19px;background:#ffffff;"></div>
<div class="a" style="left:708px;top:203px;width:1px;height:19px;background:#6e8484;"></div>
<div class="a" style="left:709px;top:203px;width:126px;height:18px;background:#c0e0e0;"></div>
<div class="a" style="left:835px;top:202px;width:1px;height:20px;background:#ffffff;"></div>
<div class="a" style="left:462px;top:221px;width:374px;height:1px;background:#ffffff;"></div>
<div class="t" style="left:466px;top:177px;font-size:13px;color:#000;">Description</div>
<div class="t" style="left:466px;top:205px;font-size:13px;color:#000;">Suppliers</div>
<div class="t" style="left:700px;top:205px;width:127px;text-align:right;font-size:13px">0.00</div>
<div class="t" style="left:713px;top:113px;font-size:13px;color:#000;">Begin:</div>
<div class="t" style="left:713px;top:129px;font-size:13px;color:#000;">End:</div>
<div class="t" style="left:713px;top:145px;font-size:13px;color:#000;">Index:</div>
<div class="t" style="left:752px;top:145px;font-size:13px;color:#000;">date</div>
<div class="t" style="left:713px;top:161px;font-size:13px;color:#000;">Type:</div>
<div class="t" style="left:753px;top:161px;font-size:13px;color:#000;">amount</div>
<div class="t" style="left:713px;top:177px;font-size:13px;color:#000;">Tag:</div>
<div class="t" style="left:754px;top:177px;font-size:13px;color:#000;">financial</div>
<div class="a" style="left:393px;top:114px;width:4px;height:200px;background:linear-gradient(to right,rgba(0,0,0,0.45) 12.5%,rgba(0,0,0,0.27) 37.5%,rgba(0,0,0,0.13) 62.5%,rgba(0,0,0,0.04) 87.5%)"></div>
<div class="a" style="left:231px;top:314px;width:162px;height:4px;background:linear-gradient(to bottom,rgba(0,0,0,0.45) 12.5%,rgba(0,0,0,0.27) 37.5%,rgba(0,0,0,0.13) 62.5%,rgba(0,0,0,0.04) 87.5%)"></div>
<div class="a" style="left:393px;top:314px;width:4px;height:4px;background:radial-gradient(circle 4.5px at 0 0,rgba(0,0,0,0.45),rgba(0,0,0,0.2) 45%,rgba(0,0,0,0) 100%)"></div>
<div class="a" style="left:227px;top:110px;width:166px;height:204px;background:#404040"></div>
<div class="a" style="left:227px;top:110px;width:165px;height:203px;background:#d4d0c8"></div>
<div class="a" style="left:228px;top:111px;width:164px;height:202px;background:#808080"></div>
<div class="a" style="left:228px;top:111px;width:163px;height:201px;background:#fff"></div>
<div class="a" style="left:229px;top:112px;width:162px;height:200px;background:#d4d0c8"></div>
<div class="a" style="left:230px;top:113px;width:160px;height:198px;background:#dcdcdc"></div>
<div class="a" style="left:230px;top:257px;width:160px;height:18px;background:#0a246a"></div>
<div class="t" style="left:251px;top:117px;font-size:10.5px;color:#000;letter-spacing:0.5px">Address</div>
<div class="t" style="left:251px;top:135px;font-size:10.5px;color:#000;letter-spacing:0.15px">Contact Info</div>
<div class="t" style="left:251px;top:153px;font-size:10.5px;color:#000;letter-spacing:0.27px">Custom Analysis</div>
<div class="t" style="left:251px;top:171px;font-size:10.5px;color:#000;letter-spacing:0px">EFT Payments Information</div>
<div class="t" style="left:251px;top:189px;font-size:10.5px;color:#000;letter-spacing:0px">Folder Management</div>
<div class="t" style="left:251px;top:207px;font-size:10.5px;color:#000;letter-spacing:0.23px">Invoice Aging</div>
<div class="t" style="left:251px;top:225px;font-size:10.5px;color:#000;letter-spacing:0.14px">Multiple Period Analysis</div>
<div class="t" style="left:251px;top:243px;font-size:10.5px;color:#000;letter-spacing:0.35px">Order Aging</div>
<div class="t" style="left:251px;top:261px;font-size:10.5px;color:#fff;letter-spacing:0.2px">Setup</div>
<div class="t" style="left:251px;top:279px;font-size:10.5px;color:#000;letter-spacing:0px">Single Period Report</div>
<div class="t" style="left:251px;top:297px;font-size:10.5px;color:#000;letter-spacing:0.19px">Trade/Tax Information</div>
<svg style="left:360px;top:264px" width="20" height="28" viewBox="360 264 20 28"><path d="M364.5 268 V285.5 L368.5 281.5 L372.2 289 L375.2 287.6 L371.6 280.5 H376.5 Z" fill="#fff" stroke="#000" stroke-width="1.05" stroke-linejoin="miter"/></svg>
</body></html>
